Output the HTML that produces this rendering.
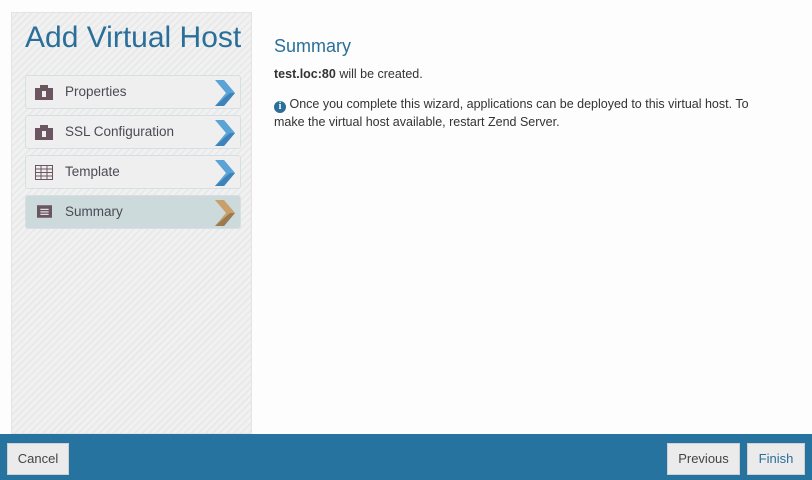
<html><head><style>
body{margin:0;width:812px;height:480px;background:#fdfdfd;font-family:"Liberation Sans",sans-serif;position:relative;overflow:hidden}
.side{position:absolute;left:11px;top:12px;width:241px;height:422px;background:repeating-linear-gradient(135deg,#f1f1f1 0 3px,#e9e9e9 3px 5px);border:1px solid #e3e3e3;box-sizing:border-box}
h1{position:absolute;left:25px;top:21px;margin:0;font-weight:normal;font-size:30px;color:#2a6f9a;letter-spacing:0}
.it{position:absolute;left:25px;width:216px;height:34px;background:#efefef;border:1px solid #d6e0e4;border-radius:3px;box-sizing:border-box;font-size:13.5px;color:#4a4a55}
.it span{position:absolute;left:39px;top:8px}
.it.a{background:#cddadc}
.ic{position:absolute;left:9px;top:9px;width:18px;height:15px}
.ch{position:absolute;right:3px;top:3px}
.foot{position:absolute;left:0;top:434px;width:812px;height:46px;background:#27739f}
.b{position:absolute;top:9px;height:32px;background:#ebebeb;border:1px solid #d0d0d0;box-sizing:border-box;font-size:13px;color:#444;text-align:center;line-height:30px}
h2{position:absolute;left:274px;top:36px;margin:0;font-weight:normal;font-size:18px;color:#2a6f9a}
p{position:absolute;left:274px;margin:0;font-size:12.5px;color:#333;line-height:18px;width:500px}
</style></head><body>
<div class="side"></div>
<h1>Add Virtual Host</h1>
<div class="it" style="top:75px"><svg class="ic" viewBox="0 0 18 15"><rect x="0" y="3" width="18" height="12" fill="#6b5560"/><rect x="5" y="0" width="8" height="4" fill="#6b5560"/><rect x="7" y="6" width="4" height="6" fill="#eee"/></svg><span>Properties</span><svg class="ch" width="24" height="28"><path d="M2 1h9l11 13-11 13H2l11-13z" fill="#5aa3d6"/><path d="M2 27h9l11-13-5 0z" fill="#3d82b8"/></svg></div>
<div class="it" style="top:115px"><svg class="ic" viewBox="0 0 18 15"><rect x="0" y="3" width="18" height="12" fill="#6b5560"/><rect x="5" y="0" width="8" height="4" fill="#6b5560"/><rect x="7" y="6" width="4" height="6" fill="#eee"/></svg><span>SSL Configuration</span><svg class="ch" width="24" height="28"><path d="M2 1h9l11 13-11 13H2l11-13z" fill="#5aa3d6"/><path d="M2 27h9l11-13-5 0z" fill="#3d82b8"/></svg></div>
<div class="it" style="top:155px"><svg class="ic" viewBox="0 0 18 15"><rect x="0.5" y="0.5" width="17" height="14" fill="#eee" stroke="#6b5560"/><path d="M1 4h16M1 7.5h16M1 11h16M6 1v14M12 1v14" stroke="#6b5560"/></svg><span>Template</span><svg class="ch" width="24" height="28"><path d="M2 1h9l11 13-11 13H2l11-13z" fill="#5aa3d6"/><path d="M2 27h9l11-13-5 0z" fill="#3d82b8"/></svg></div>
<div class="it a" style="top:195px"><svg class="ic" viewBox="0 0 18 15" style="left:11px;width:15px;height:17px;top:7px"><rect x="0" y="0" width="18" height="15" fill="#6b5560"/><path d="M4 5h10M4 8h10M4 11h10" stroke="#ddd" stroke-width="1.5"/></svg><span>Summary</span><svg class="ch" width="24" height="28"><path d="M2 1h9l11 13-11 13H2l11-13z" fill="#c9a06a"/><path d="M2 27h9l11-13-5 0z" fill="#9a7a50"/></svg></div>
<h2>Summary</h2>
<p style="top:65px"><b>test.loc:80</b> will be created.</p>
<p style="top:95px"><span style="display:inline-block;width:12px;height:12px;border-radius:50%;background:#2a6f9a;color:#fff;font-size:10px;font-weight:bold;text-align:center;line-height:12px;font-family:'Liberation Serif',serif;vertical-align:-1px">i</span> Once you complete this wizard, applications can be deployed to this virtual host. To make the virtual host available, restart Zend Server.</p>
<div class="foot">
<div class="b" style="left:7px;width:62px">Cancel</div>
<div class="b" style="left:667px;width:73px">Previous</div>
<div class="b" style="left:747px;width:58px;color:#2a6f9a">Finish</div>
</div>
</body></html>
